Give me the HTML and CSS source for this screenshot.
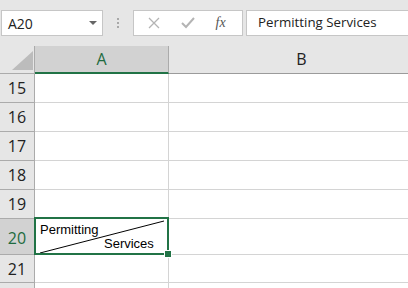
FILE: index.html
```html
<!DOCTYPE html>
<html>
<head>
    <title>Sheet</title>
    <link rel="stylesheet" href="styles.css">
</head>
<body>
    <div class="toolbar">
        <div class="name-box">
            <span>A20</span>
            <span class="caret"></span>
        </div>
        <div class="grip"><i></i><i></i><i></i></div>
        <div class="fx-buttons">
            <svg width="12" height="12" viewBox="0 0 12 12"><path d="M1 1 L11 11 M11 1 L1 11" stroke="#b4b4b4" stroke-width="1.3" fill="none"/></svg>
            <svg width="14" height="12" viewBox="0 0 14 12"><path d="M1 6 L5 10 L13 1" stroke="#b4b4b4" stroke-width="2" fill="none"/></svg>
            <span class="fx">fx</span>
        </div>
        <div class="formula">Permitting Services</div>
    </div>

    <div class="sheet">
        <div class="corner">
            <svg width="21" height="19" viewBox="0 0 21 19"><polygon points="21,0 21,19 0,19" fill="#bcbcbc"/></svg>
        </div>
        <div class="col-head active">A</div>
        <div class="col-head">B</div>

        <div class="row-head">15</div><div class="cell a"></div><div class="cell"></div>
        <div class="row-head">16</div><div class="cell a"></div><div class="cell"></div>
        <div class="row-head">17</div><div class="cell a"></div><div class="cell"></div>
        <div class="row-head">18</div><div class="cell a"></div><div class="cell"></div>
        <div class="row-head">19</div><div class="cell a"></div><div class="cell"></div>
        <div class="row-head active">20</div>
        <div class="cell a selected">
            <svg class="diag" width="134" height="36" viewBox="0 0 134 36"><line x1="5" y1="34" x2="129" y2="2" stroke="#000" stroke-width="1"/></svg>
            <span class="top-text">Permitting</span>
            <span class="bottom-text">Services</span>
            <div class="sel-box"><div class="handle"></div></div>
        </div>
        <div class="cell"></div>
        <div class="row-head">21</div><div class="cell a"></div><div class="cell"></div>
        <div class="row-head"></div><div class="cell a"></div><div class="cell"></div>
    </div>
</body>
</html>
```

FILE: styles.css
```css
/* spreadsheet window */
body {
    margin: 0;
    width: 408px;
    height: 288px;
    overflow: hidden;
    background-color: #e6e6e6;
    font-family: "Open Sans", sans-serif;
}

.toolbar {
    height: 46px;
    box-sizing: border-box;
    padding: 10px 0 0 1px;
    display: flex;
    align-items: flex-start;
}

.name-box {
    width: 102px;
    height: 26px;
    box-sizing: border-box;
    background-color: #fff;
    border: 1px solid #c6c6c6;
    display: flex;
    align-items: center;
    justify-content: space-between;
    padding: 0 5px 0 6px;
    font-size: 14px;
    color: #222;
}

.caret {
    width: 0;
    height: 0;
    border-left: 4px solid transparent;
    border-right: 4px solid transparent;
    border-top: 4px solid #666;
}

.grip {
    width: 30px;
    height: 26px;
    display: flex;
    flex-direction: column;
    align-items: center;
    justify-content: center;
    gap: 2px;
}

.grip i {
    width: 2px;
    height: 2px;
    background-color: #a8a8a8;
}

.fx-buttons {
    width: 110px;
    height: 26px;
    box-sizing: border-box;
    background-color: #fff;
    border: 1px solid #c6c6c6;
    display: flex;
    align-items: center;
    justify-content: space-around;
    padding: 0 6px 0 4px;
}

.fx {
    font-family: "Liberation Serif", serif;
    font-style: italic;
    font-size: 14px;
    color: #555;
}

.formula {
    flex: 1;
    margin-left: 3px;
    margin-right: -2px;
    height: 26px;
    box-sizing: border-box;
    background-color: #fff;
    border: 1px solid #c6c6c6;
    padding: 0 0 0 11px;
    font-size: 13.3px;
    line-height: 23px;
    color: #222;
}

.sheet {
    display: grid;
    grid-template-columns: 35px 134px 266px;
    grid-template-rows: 28px 29px 29px 29px 29px 29px 36px 28px 29px;
    background-color: #fff;
}

.corner {
    background-color: #e6e6e6;
    border-right: 1px solid #ababab;
    border-bottom: 1px solid #ababab;
    display: flex;
    align-items: flex-end;
    padding: 0 0 3px 12px;
}

.col-head {
    background-color: #e6e6e6;
    border-right: 1px solid #ababab;
    border-bottom: 1px solid #9b9b9b;
    text-align: center;
    font-size: 16px;
    line-height: 27px;
    color: #222;
}

.col-head.active {
    background-color: #d2d2d2;
    border-bottom: 2px solid #217346;
    color: #1e6b40;
}

.row-head {
    background-color: #e6e6e6;
    border-right: 1px solid #ababab;
    border-bottom: 1px solid #ababab;
    text-align: center;
    font-size: 16px;
    line-height: 28px;
    color: #222;
}

.row-head.active {
    background-color: #d2d2d2;
    color: #1e6b40;
    line-height: 39px;
}

.cell {
    border-bottom: 1px solid #d4d4d4;
}

.cell.a {
    border-right: 1px solid #d4d4d4;
}

.selected {
    position: relative;
    font-family: "Liberation Sans", sans-serif;
    font-size: 13px;
    color: #000;
}

.diag {
    position: absolute;
    left: 0;
    top: 0;
}

.top-text {
    position: absolute;
    left: 5px;
    top: 3px;
}

.bottom-text {
    position: absolute;
    left: 69px;
    top: 17px;
}

.sel-box {
    position: absolute;
    left: -1px;
    top: -2px;
    right: -1px;
    bottom: -1px;
    border: 2px solid #217346;
}

.handle {
    position: absolute;
    right: -5px;
    bottom: -5px;
    width: 6px;
    height: 6px;
    background-color: #217346;
    border: 1px solid #fff;
}
```
